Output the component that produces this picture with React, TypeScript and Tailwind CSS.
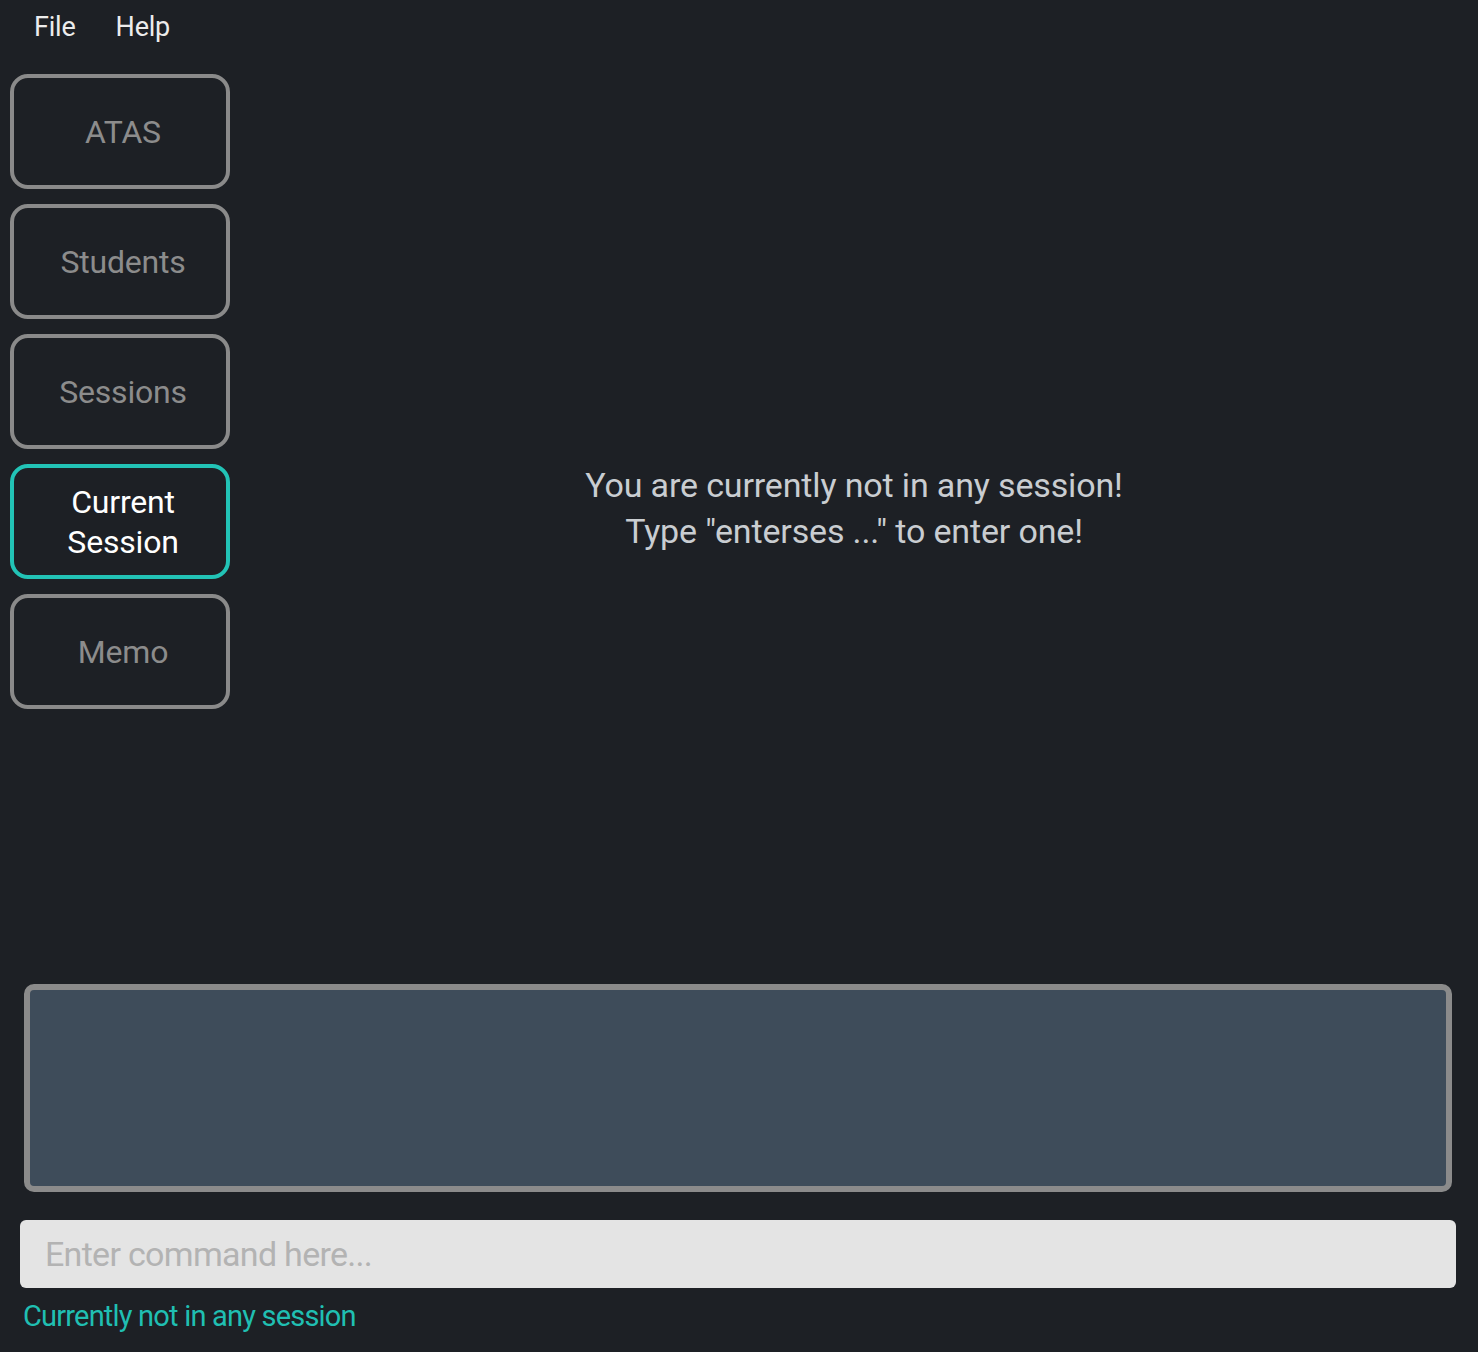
import React from "react";

const tabs = [
  { label: "ATAS", active: false },
  { label: "Students", active: false },
  { label: "Sessions", active: false },
  { label: "Current Session", active: true },
  { label: "Memo", active: false },
];

export default function App() {
  return (
    <div className="w-full h-[1352px] bg-[#1d2025] flex flex-col overflow-hidden font-['Roboto','Liberation_Sans',sans-serif]">
      {/* Menu bar */}
      <div className="h-[55px] flex items-center gap-[40px] pl-[34px] text-[27px] text-[#ececec] tracking-[-0.2px]">
        <span>File</span>
        <span>Help</span>
      </div>

      {/* Sidebar + content */}
      <div className="flex-1 flex min-h-0">
        <div className="flex flex-col gap-[15px] pl-[10px] pt-[19px]">
          {tabs.map((t) => (
            <div
              key={t.label}
              className={`w-[220px] h-[115px] rounded-[18px] border-[4px] flex items-center justify-center text-center text-[32px] leading-[40px] pl-[42px] pr-[36px] tracking-[-0.2px] ${
                t.active ? "border-[#22c3b6] text-white" : "border-[#8a8a8a] text-[#8c8c8c]"
              }`}
            >
              {t.label}
            </div>
          ))}
        </div>
        <div className="flex-1 flex items-center justify-center pb-[24px]">
          <p className="text-center text-[34px] leading-[46px] text-[#c9cdd1] tracking-[-0.15px]">
            You are currently not in any session!
            <br />
            Type "enterses ..." to enter one!
          </p>
        </div>
      </div>

      {/* Bottom: result display, command box, status */}
      <div className="flex flex-col">
        <div className="ml-[24px] mr-[26px] h-[208px] bg-[#1d2025]">
          <div className="w-full h-full rounded-[10px] border-[6px] border-[#8b8b8b] bg-[#3e4c5a]" />
        </div>
        <div className="ml-[20px] mr-[22px] mt-[28px] h-[68px] rounded-[6px] bg-[#e4e4e4] flex items-center pl-[25px]">
          <span className="text-[34px] text-[#b3b3b3] tracking-[-0.7px]">Enter command here...</span>
        </div>
        <div className="h-[64px] pl-[23px] flex items-center pb-[6px]">
          <span className="text-[29px] text-[#20bfb2] tracking-[-0.8px]">Currently not in any session</span>
        </div>
      </div>
    </div>
  );
}
